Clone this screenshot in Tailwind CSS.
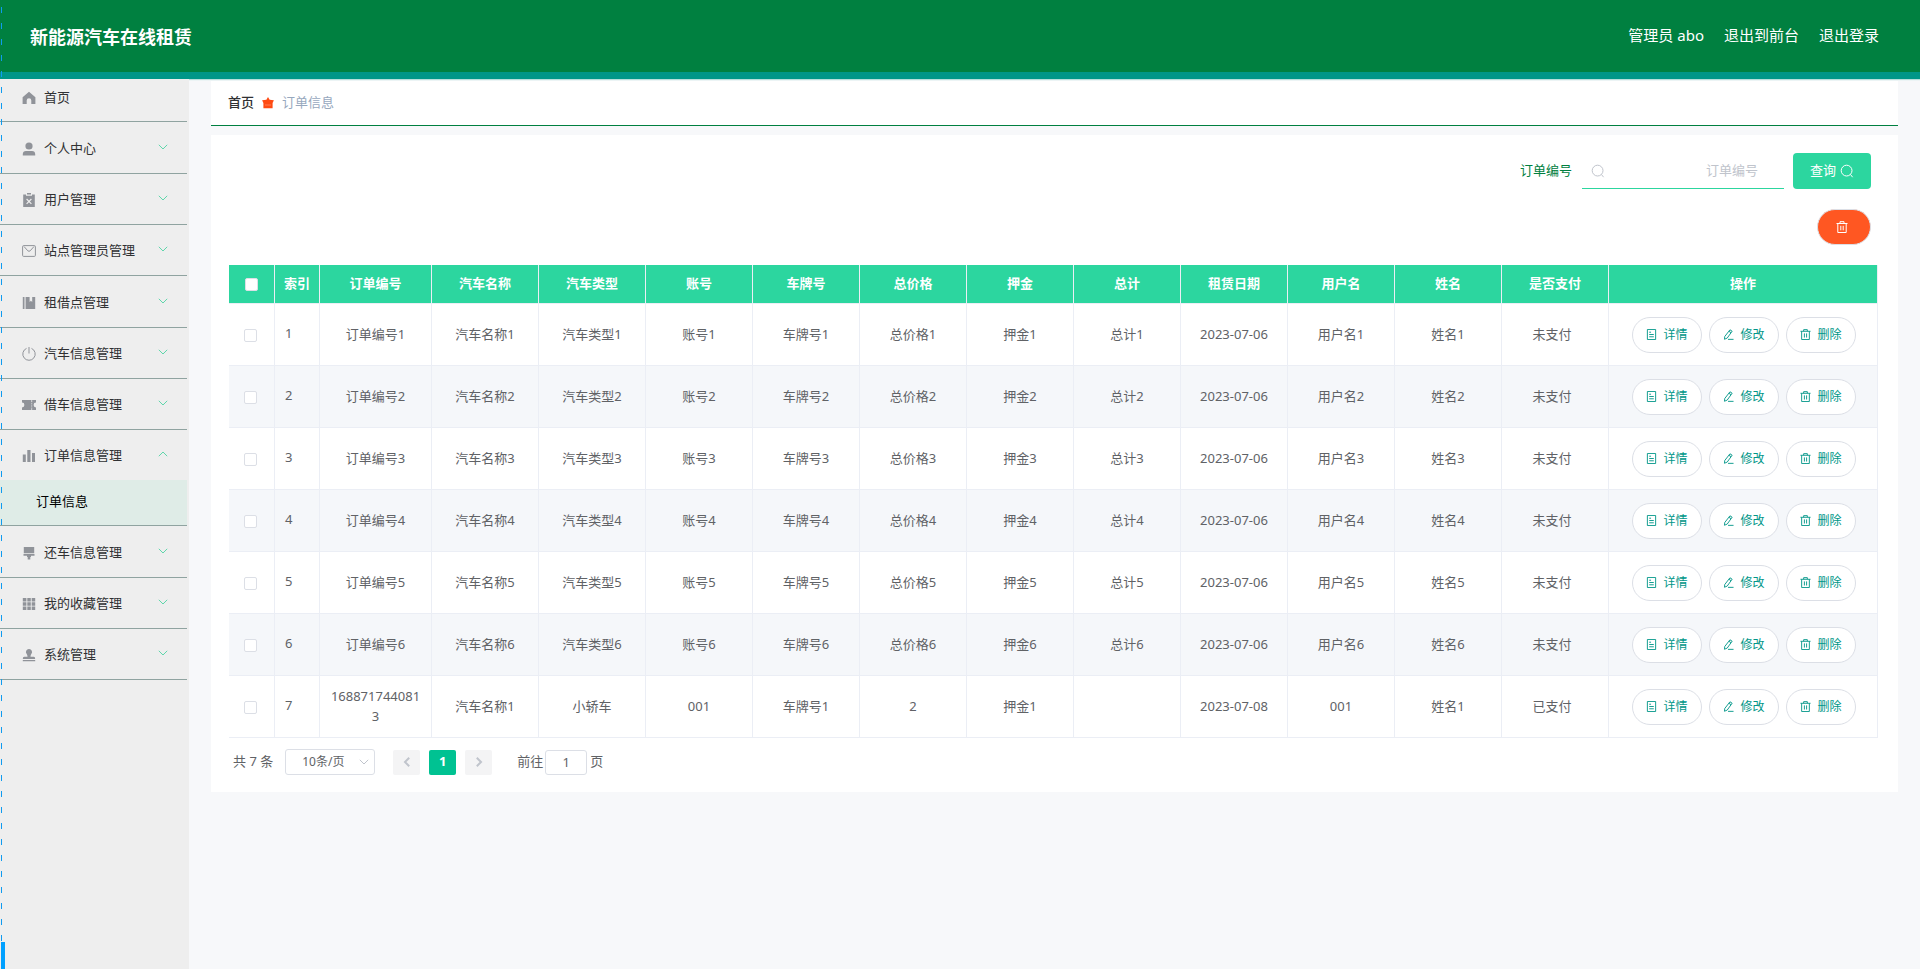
<!DOCTYPE html>
<html lang="zh-CN">
<head>
<meta charset="utf-8">
<meta name="viewport" content="width=device-width, initial-scale=1">
<title>新能源汽车在线租赁</title>
<script src="https://cdn.jsdelivr.net/npm/@tailwindcss/browser@4"></script>
</head>
<body class="relative flex min-h-screen flex-col bg-[#f7f8fa] font-['Noto_Sans','Noto_Sans_CJK_SC',sans-serif] text-[13px] text-[#606266]">

<svg class="hidden" aria-hidden="true">
  <symbol id="i-home" viewBox="0 0 14 14"><path fill="currentColor" d="M7 .8.6 6.200V13H4.700V9.500a2.300 2.300 0 0 1 4.600 0V13h4.100V6.200z"/></symbol>
  <symbol id="i-user" viewBox="0 0 14 14"><circle cx="7" cy="4" r="3.600" fill="currentColor"/><path fill="currentColor" d="M.8 13.500v-1.500A3.200 3.200 0 0 1 4 8.900h6a3.200 3.200 0 0 1 3.200 3.100v1.500z"/></symbol>
  <symbol id="i-clip" viewBox="0 0 14 14"><path fill="currentColor" d="M5 0h4v1.500H5zM1.200 1.500H4v1.200h6V1.500h2.800V14H1.200z"/><path stroke="#eee" stroke-width="1.200" d="m4.600 6 4.800 4.800M9.400 6l-4.800 4.800"/></symbol>
  <symbol id="i-mail" viewBox="0 0 14 14"><rect x=".6" y="1.600" width="12.800" height="10.800" rx="1" fill="none" stroke="currentColor"/><path fill="none" stroke="currentColor" d="M2 2.500 5.800 6.800q1.200 1 2.400 0L12 2.500"/></symbol>
  <symbol id="i-book" viewBox="0 0 14 14"><path fill="currentColor" d="M.8 1h1.700v12H.8zM3.600 1h4v5l1.300-1.300L10.200 6V1h3v12H3.600z"/></symbol>
  <symbol id="i-power" viewBox="0 0 14 14"><path fill="none" stroke="currentColor" d="M4.500 1.400a6.200 6.200 0 1 0 5 0M7 0v6.500"/></symbol>
  <symbol id="i-ticket" viewBox="0 0 14 14"><path fill="currentColor" d="M0 2h9l.7 1 .7-1H14v2.600a2.400 2.400 0 0 0 0 4.800V12h-3.600l-.7-1-.7 1H0V9.400a2.400 2.400 0 0 0 0-4.800z"/><path stroke="#eee" stroke-width=".8" stroke-dasharray="1.200 1" d="M9.700 3v8"/></symbol>
  <symbol id="i-bars" viewBox="0 0 14 14"><path fill="currentColor" d="M.8 5.500h3V13h-3zM5.300 1h3.200v12H5.300zM10 4h3v9h-3z"/></symbol>
  <symbol id="i-brush" viewBox="0 0 14 14"><path fill="currentColor" d="M1.800 1h10.400v6.200H1.800zM1.500 8h11v1.800H9V11H8.300v2.500H5.700V11H5V9.800H1.500z"/></symbol>
  <symbol id="i-grid" viewBox="0 0 14 14"><path fill="currentColor" d="M.8 1h3.600v3.400H.8zM5.300 1h3.500v3.400H5.300zM9.700 1h3.500v3.400H9.700zM.8 5.300h3.600v3.400H.8zM5.300 5.300h3.500v3.400H5.300zM9.700 5.300h3.500v3.400H9.700zM.8 9.600h3.600V13H.8zM5.300 9.600h3.500V13H5.300zM9.700 9.600h3.500V13H9.700z"/></symbol>
  <symbol id="i-stamp" viewBox="0 0 14 14"><path fill="currentColor" d="M7 1a3 3 0 0 1 2.300 5Q8.500 7 8.500 8.800h3.300q1.400 0 1.400 2.200H.8q0-2.200 1.400-2.200h3.300Q5.500 7 4.700 6A3 3 0 0 1 7 1zM.8 12h12.400v1.200H.8z"/></symbol>
  <symbol id="i-down" viewBox="0 0 10 10"><path fill="none" stroke="currentColor" d="m.8 2.800 4.200 4.200 4.200-4.200"/></symbol>
  <symbol id="i-search" viewBox="0 0 14 14"><circle cx="6.600" cy="6.600" r="5.400" fill="none" stroke="currentColor"/><path stroke="currentColor" d="m10.400 10.400 2.200 2.800"/></symbol>
  <symbol id="i-trash" viewBox="0 0 12 12"><path fill="none" stroke="currentColor" d="M.5 2.500h11M4 2.500V.700h4v1.800M1.800 2.500v9h8.400v-9M4.800 4.800v4.500M7.200 4.800v4.500"/></symbol>
  <symbol id="i-doc" viewBox="0 0 12 12"><path fill="none" stroke="currentColor" d="M1.500.5h9v11h-9zM3.500 3.500h2M3.500 6h5M3.500 8.500h5"/></symbol>
  <symbol id="i-edit" viewBox="0 0 12 12"><path fill="none" stroke="currentColor" d="M7.600.9 10 2.400 4.600 9.900 1.600 11.200 1.900 8.200zM6.500 2.500l2.300 1.600M5.500 11.300H11.500"/></symbol>
  <symbol id="i-badge" viewBox="0 0 12 12"><path fill="currentColor" d="M6 0 7.600 2.800 11.900 3.200 10.600 6V11.300H1.400V6L.1 3.200 4.400 2.800z"/><path stroke="#ff8a66" stroke-width=".8" d="M3 8h6"/></symbol>
</svg>

<div class="pointer-events-none absolute top-[7px] bottom-[27px] left-px w-px bg-[repeating-linear-gradient(to_bottom,#0f9bf0_0_6px,transparent_6px_16px)]"></div>
<div class="pointer-events-none absolute bottom-0 left-px h-[27px] w-1 bg-[#00a0ff]"></div>

<header class="flex h-[79px] shrink-0 items-center justify-between border-b-[7px] border-[#009688] bg-[#008040] pr-[41px] pl-[30px] text-white shadow-[0_1px_1px_#b8dedb]">
  <h1 class="pt-0.5 text-[18px] font-bold">新能源汽车在线租赁</h1>
  <nav class="flex gap-5 pb-0.5 text-[15px]">
    <span>管理员 abo</span>
    <a href="#">退出到前台</a>
    <a href="#">退出登录</a>
  </nav>
</header>

<div class="flex flex-1">
  <aside class="w-[189px] shrink-0 bg-[#eee] pr-0.5">
    <ul id="menu" class="text-[#303133]"></ul>
  </aside>

  <main class="min-w-0 flex-1 px-[22px] pt-0.5">
    <nav class="flex h-[45px] items-center gap-2 border-b border-[#008040] bg-white pl-[17px]">
      <a href="#" class="font-medium text-[#303133]">首页</a>
      <svg class="size-3 text-[#ff4a12]"><use href="#i-badge"/></svg>
      <span class="text-[#97a8be]">订单信息</span>
    </nav>

    <section class="mt-[9px] bg-white pt-[18px] pr-5 pb-[17px] pl-[18px]">
      <form class="flex h-9 items-center justify-end pr-[7px]">
        <label for="order" class="mr-2.5 text-[#008040]">订单编号</label>
        <div class="mr-[9px] flex h-9 w-[202px] items-center border-b border-[#2cd69f] pr-[26px] pl-[9px]">
          <svg class="size-[14px] shrink-0 text-[#c0c4cc]"><use href="#i-search"/></svg>
          <input id="order" type="text" placeholder="订单编号" class="min-w-0 flex-1 text-right outline-none placeholder:text-[#c0c4cc]">
        </div>
        <button type="button" class="flex h-9 w-[78px] items-center justify-center gap-1 rounded bg-[#2cd69f] text-white">查询<svg class="size-[14px]"><use href="#i-search"/></svg></button>
      </form>
      <div class="mt-5 mb-5 flex justify-end pr-[7px]">
        <button type="button" aria-label="删除" class="flex h-9 w-[54px] items-center justify-center rounded-full border border-[#dcdfe6] bg-[#ff5722] pr-1 text-white"><svg class="size-3"><use href="#i-trash"/></svg></button>
      </div>

      <table class="w-full table-fixed border-separate border-spacing-0 text-center">
        <colgroup>
          <col class="w-[46px]"><col class="w-[45px]"><col class="w-[112px]">
          <col class="w-[107px]"><col class="w-[107px]"><col class="w-[107px]"><col class="w-[107px]"><col class="w-[107px]"><col class="w-[107px]">
          <col class="w-[107px]"><col class="w-[107px]"><col class="w-[107px]"><col class="w-[107px]"><col class="w-[107px]"><col>
        </colgroup>
        <thead><tr id="head" class="h-[39px] bg-[#2cd69f] text-white"></tr></thead>
        <tbody id="body"></tbody>
      </table>

      <div class="mt-[11px] flex items-center pl-1">
        <span class="mr-3">共 7 条</span>
        <div class="relative mr-[18px]">
          <select aria-label="每页条数" class="block h-[26px] w-[90px] appearance-none rounded-[3px] border border-[#dcdfe6] bg-white pl-4 text-xs"><option>10条/页</option></select>
          <svg class="pointer-events-none absolute top-2 right-1.5 size-2.5 text-[#c0c4cc]"><use href="#i-down"/></svg>
        </div>
        <button type="button" aria-label="上一页" class="mr-[9px] flex h-[25px] w-[27px] items-center justify-center rounded-xs bg-[#f4f4f5] text-[#c0c4cc]"><svg class="size-2.5 rotate-90 stroke-2"><use href="#i-down"/></svg></button>
        <button type="button" class="mr-[9px] h-[25px] w-[27px] rounded-xs bg-[#00c292] font-bold text-white">1</button>
        <button type="button" aria-label="下一页" class="mr-[25px] flex h-[25px] w-[27px] items-center justify-center rounded-xs bg-[#f4f4f5] text-[#c0c4cc]"><svg class="size-2.5 -rotate-90 stroke-2"><use href="#i-down"/></svg></button>
        <label for="page" class="mr-0.5">前往</label>
        <input id="page" type="text" value="1" class="mr-[3px] h-[25px] w-[42px] rounded-[3px] border border-[#dcdfe6] text-center">
        <span>页</span>
      </div>
    </section>
  </main>
</div>

<script>
const menu = [
  ['home', '首页'], ['user', '个人中心'], ['clip', '用户管理'], ['mail', '站点管理员管理'],
  ['book', '租借点管理'], ['power', '汽车信息管理'], ['ticket', '借车信息管理'],
  ['bars', '订单信息管理', '订单信息'], ['brush', '还车信息管理'], ['grid', '我的收藏管理'], ['stamp', '系统管理']
];
document.getElementById('menu').innerHTML = menu.map(([icon, label, sub], i) => `
  <li class="border-b border-[#8fa3a0]">
    <a href="#" class="flex items-center pl-[22px] pr-[19px] ${i === 0 ? 'h-[42px] pb-1' : [1, 4, 8].includes(i) ? 'h-[51px] pt-0.5' : 'h-[50px] pt-0.5'}">
      <svg class="mr-2 size-[14px] text-[#909399]"><use href="#i-${icon}"/></svg>
      <span class="flex-1">${label}</span>
      ${i ? `<svg class="mb-1 size-2.5 text-[#5fd6ab] ${sub ? 'rotate-180' : ''}"><use href="#i-down"/></svg>` : ''}
    </a>
    ${sub ? `<a href="#" class="flex h-[45px] items-center bg-[#dfece7] pb-0.5 pl-9 text-black">${sub}</a>` : ''}
  </li>`).join('');

const heads = ['索引', '订单编号', '汽车名称', '汽车类型', '账号', '车牌号', '总价格', '押金', '总计', '租赁日期', '用户名', '姓名', '是否支付', '操作'];
const box = label => `<input type="checkbox" aria-label="${label}" class="mx-auto mt-px block size-[13px] appearance-none rounded-xs border border-[#dcdfe6] bg-white">`;
document.getElementById('head').innerHTML =
  `<th class="border-r border-b border-[#ebeef5]">${box('全选')}</th>` +
  heads.map(h => `<th class="border-r border-b border-[#ebeef5] font-bold">${h}</th>`).join('');

const rows = [1, 2, 3, 4, 5, 6].map(n => ['订单编号' + n, '汽车名称' + n, '汽车类型' + n, '账号' + n, '车牌号' + n, '总价格' + n, '押金' + n, '总计' + n, '2023-07-06', '用户名' + n, '姓名' + n, '未支付']);
rows.push(['1688717440813', '汽车名称1', '小轿车', '001', '车牌号1', '2', '押金1', '', '2023-07-08', '001', '姓名1', '已支付']);
const button = (icon, label) => `<button type="button" class="flex h-9 w-[70px] items-center justify-center gap-1.5 rounded-full border border-[#dcdfe6] bg-white text-xs text-[#009688]"><svg class="size-[11px]"><use href="#i-${icon}"/></svg>${label}</button>`;
document.getElementById('body').innerHTML = rows.map((r, i) => `
  <tr class="h-[62px] even:bg-[#f5f7fa]">
    <td class="border-r border-b border-[#ebeef5] pr-0.5">${box('选择第' + (i + 1) + '行')}</td>
    <td class="border-r border-b border-[#ebeef5] pb-0.5 pl-2.5 text-left">${i + 1}</td>
    ${r.map((c, j) => `<td class="border-r border-b border-[#ebeef5] pb-0.5 pl-2.5 leading-5 break-all ${j === 11 ? 'pr-4' : 'pr-2.5'}">${c}</td>`).join('')}
    <td class="border-r border-b border-[#ebeef5] pl-0.5"><div class="flex justify-center gap-[7px]">${button('doc', '详情')}${button('edit', '修改')}${button('trash', '删除')}</div></td>
  </tr>`).join('');
</script>
</body>
</html>
